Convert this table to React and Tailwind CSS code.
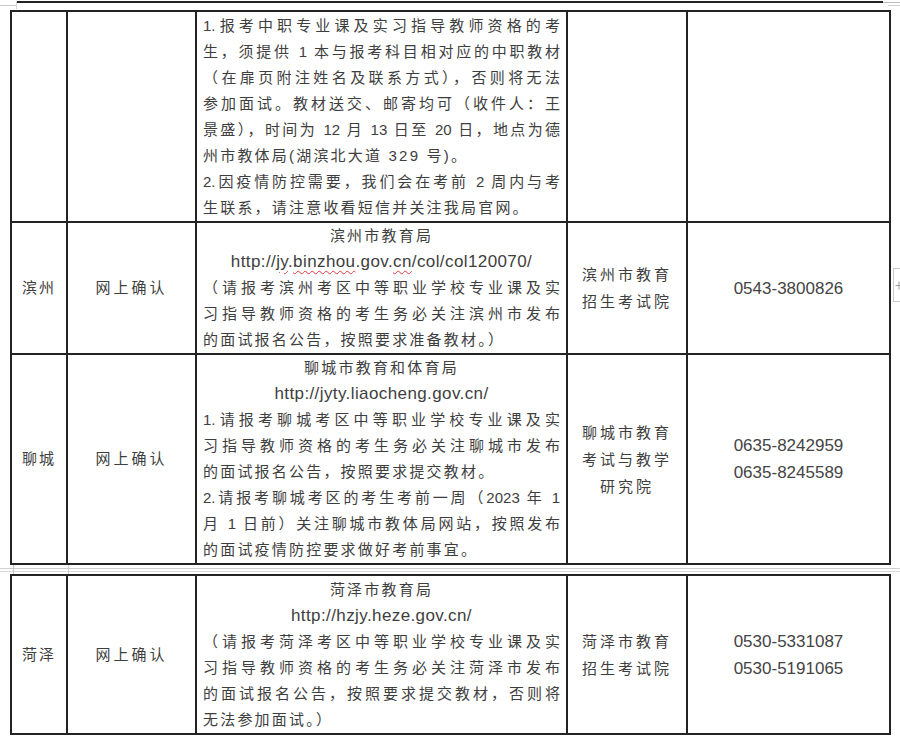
import React from 'react'

const cell = "border-2 border-[#232323] p-0 align-middle"
const txt = "text-[15px] leading-[26px] tracking-[2.2px]"

function J({ children }) {
    return <div className="text-justify [text-align-last:justify] tracking-normal">{children}</div>
}

function L({ children }) {
    return <div className="text-left">{children}</div>
}

function C({ children }) {
    return <div className="text-center">{children}</div>
}

function Url({ children }) {
    return <div className="text-center text-[17px] tracking-[0.4px]">{children}</div>
}

function Wavy({ children }) {
    return <span className="underline decoration-wavy decoration-[#e0393e] decoration-1 underline-offset-[3px]">{children}</span>
}

function Cols() {
    return (
        <colgroup>
            <col className="w-[56px]" />
            <col className="w-[129px]" />
            <col className="w-[371px]" />
            <col className="w-[120px]" />
            <col className="w-[203px]" />
        </colgroup>
    )
}

function Row({ h, city, org, phones, children }) {
    return (
        <tr>
            <td className={`${cell} ${h} text-center tracking-[2px]`}>{city}</td>
            <td className={`${cell} text-center tracking-[3px]`}>{city ? '网上确认' : ''}</td>
            <td className={`${cell} px-[6px]`}>{children}</td>
            <td className={`${cell} text-center tracking-[3px] leading-[27px]`}>
                {org && org.map((o) => <div key={o}>{o}</div>)}
            </td>
            <td className={`${cell} text-center text-[17px] tracking-normal leading-[27px] text-[#444]`}>
                {phones && phones.map((p) => <div key={p}>{p}</div>)}
            </td>
        </tr>
    )
}

export default function App() {
    return (
        <div className={`relative w-[900px] h-[742px] overflow-hidden bg-white text-[#3e3e3e] font-['Liberation_Sans','Noto_Sans_CJK_SC',sans-serif] ${txt}`}>
            {/* previous page's last border + page corner marks */}
            <div className="relative h-[9px]">
                <div className="ml-[17px] mt-px h-[2px] w-[866px] bg-[#222]" />
                <div className="absolute left-0 top-[4px] h-px w-[16px] bg-[#c8c8c8]" />
                <div className="absolute left-[16px] top-0 h-[8px] w-px bg-[#d4d4d4]" />
                <div className="absolute right-0 top-[1px] h-px w-[17px] bg-[#bdbdbd]" />
                <div className="absolute right-0 top-[4px] h-px w-[12px] bg-[#d0d0d0]" />
            </div>

            <table className="ml-[10px] w-[881px] table-fixed">
                <Cols />
                <tbody>
                    <Row h="h-[211px]">
                        <J>1.报考中职专业课及实习指导教师资格的考</J>
                        <J>生，须提供 1 本与报考科目相对应的中职教材</J>
                        <J>（在扉页附注姓名及联系方式），否则将无法</J>
                        <J>参加面试。教材送交、邮寄均可（收件人：王</J>
                        <J>景盛），时间为 12 月 13 日至 20 日，地点为德</J>
                        <L>州市教体局(湖滨北大道 329 号)。</L>
                        <J>2.因疫情防控需要，我们会在考前 2 周内与考</J>
                        <L>生联系，请注意收看短信并关注我局官网。</L>
                    </Row>
                    <Row h="h-[132px]" city="滨州" org={['滨州市教育', '招生考试院']} phones={['0543-3800826']}>
                        <C>滨州市教育局</C>
                        <Url>http://<Wavy>jy</Wavy>.<Wavy>binzhou</Wavy>.gov.<Wavy>cn</Wavy>/col/col120070/</Url>
                        <J>（请报考滨州考区中等职业学校专业课及实</J>
                        <J>习指导教师资格的考生务必关注滨州市发布</J>
                        <L>的面试报名公告，按照要求准备教材。）</L>
                    </Row>
                    <Row h="h-[210px]" city="聊城" org={['聊城市教育', '考试与教学', '研究院']} phones={['0635-8242959', '0635-8245589']}>
                        <C>聊城市教育和体育局</C>
                        <Url>http://jyty.liaocheng.gov.cn/</Url>
                        <J>1.请报考聊城考区中等职业学校专业课及实</J>
                        <J>习指导教师资格的考生务必关注聊城市发布</J>
                        <L>的面试报名公告，按照要求提交教材。</L>
                        <J>2.请报考聊城考区的考生考前一周（2023 年 1</J>
                        <J>月 1 日前）关注聊城市教体局网站，按照发布</J>
                        <L>的面试疫情防控要求做好考前事宜。</L>
                    </Row>
                </tbody>
            </table>

            {/* page break */}
            <div className="relative flex h-[9px] flex-col justify-center gap-[2px]">
                <div className="h-px w-full bg-[#cfcfcf]" />
                <div className="h-px w-full bg-[#d8d8d8]" />
                <div className="absolute left-[13px] top-0 h-full w-px bg-[#c4c4c4]" />
                <div className="absolute left-[68px] top-0 h-full w-px bg-[#d0d0d0]" />
            </div>

            <table className="ml-[10px] w-[881px] table-fixed">
                <Cols />
                <tbody>
                    <Row h="h-[159px]" city="菏泽" org={['菏泽市教育', '招生考试院']} phones={['0530-5331087', '0530-5191065']}>
                        <C>菏泽市教育局</C>
                        <Url>http://hzjy.heze.gov.cn/</Url>
                        <J>（请报考菏泽考区中等职业学校专业课及实</J>
                        <J>习指导教师资格的考生务必关注菏泽市发布</J>
                        <J>的面试报名公告，按照要求提交教材，否则将</J>
                        <L>无法参加面试。）</L>
                    </Row>
                </tbody>
            </table>

            {/* row insert handle in the right margin */}
            <div className="absolute left-[893px] top-[268px] h-[34px] w-[7px] border-y border-l border-[#c9c9c9]">
                <svg className="absolute left-[1px] top-[12px]" width="8" height="9" viewBox="0 0 8 9">
                    <path d="M4 0.5V8.5M0.5 4.5H7.5" stroke="#9a9a9a" strokeWidth="1" fill="none" />
                </svg>
            </div>
        </div>
    )
}
